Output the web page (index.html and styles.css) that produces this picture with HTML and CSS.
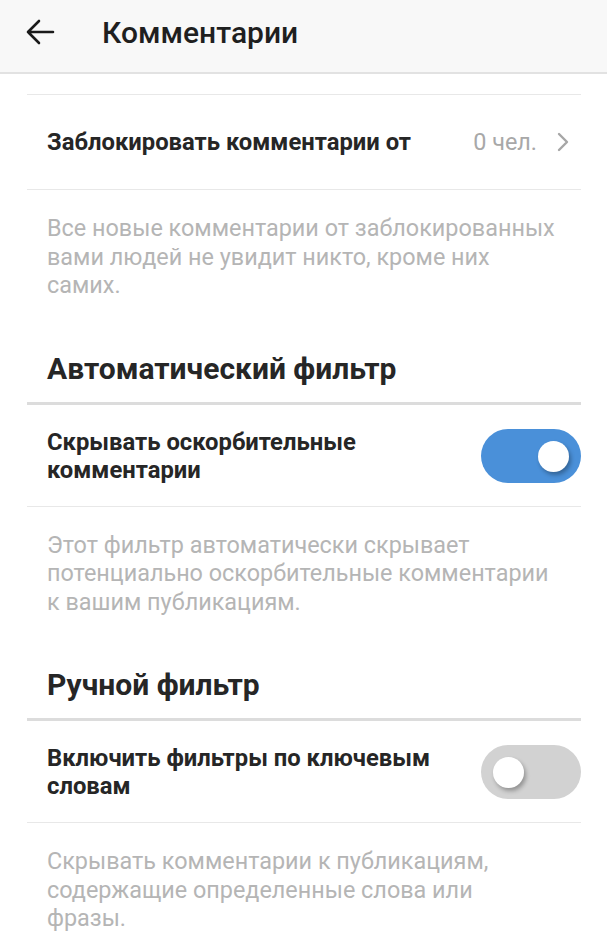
FILE: index.html
```html
<!DOCTYPE html>
<html lang="ru">
<head>
    <meta charset="UTF-8">
    <meta name="viewport" content="width=device-width, initial-scale=1.0">
    <title>Комментарии</title>
    <link rel="stylesheet" href="styles.css">
</head>
<body>
    <!-- Верхняя панель -->
    <div class="topbar">
        <span class="back">
            <svg width="30" height="26" viewBox="0 0 30 26">
                <path d="M28 13H3M14 2L3 13l11 11" fill="none" stroke="#1a1a1a" stroke-width="2.6" stroke-linecap="round" stroke-linejoin="round"/>
            </svg>
        </span>
        <span class="topbar-title">Комментарии</span>
    </div>

    <div class="content">
        <div class="spacer"></div>

        <div class="row">
            <span class="row-label">Заблокировать комментарии от</span>
            <span class="row-value">0 чел.</span>
            <svg class="chevron" width="16" height="22" viewBox="0 0 16 22">
                <path d="M4 3l8 8-8 8" fill="none" stroke="#a6a6a6" stroke-width="2.4" stroke-linecap="round" stroke-linejoin="round"/>
            </svg>
        </div>
        <p class="desc">Все новые комментарии от заблокированных<br>вами людей не увидит никто, кроме них<br>самих.</p>

        <h2 class="section-title">Автоматический фильтр</h2>
        <div class="row row-toggle">
            <span class="row-label">Скрывать оскорбительные<br>комментарии</span>
            <span class="toggle on"><span class="knob"></span></span>
        </div>
        <p class="desc">Этот фильтр автоматически скрывает<br>потенциально оскорбительные комментарии<br>к вашим публикациям.</p>

        <h2 class="section-title">Ручной фильтр</h2>
        <div class="row row-toggle">
            <span class="row-label">Включить фильтры по ключевым<br>словам</span>
            <span class="toggle"><span class="knob"></span></span>
        </div>
        <p class="desc">Скрывать комментарии к публикациям,<br>содержащие определенные слова или<br>фразы.</p>
    </div>
</body>
</html>
```

FILE: styles.css
```css
body {
    font-family: Roboto, "Noto Sans", Arial, sans-serif;
    margin: 0;
    padding: 0;
    background-color: #fff;
    color: #262626;
}

/* Верхняя панель */
.topbar {
    display: flex;
    align-items: center;
    height: 64px;
    padding-bottom: 8px;
    background-color: #f8f8f8;
    border-bottom: 2px solid #e2e2e2;
}
.back {
    display: flex;
    margin-left: 25px;
    margin-right: 47px;
}
.topbar-title {
    font-size: 30px;
    font-weight: 500;
    color: #1f1f1f;
}

/* Содержимое */
.content {
    padding: 0 26px 0 27px;
}
.spacer {
    height: 20px;
    border-bottom: 1px solid #e8e8e8;
}

.row {
    display: flex;
    align-items: center;
    height: 94px;
    padding: 0 10px 0 20px;
    border-bottom: 1px solid #e8e8e8;
}
.row-label {
    flex: 1;
    font-size: 23.8px;
    font-weight: bold;
    line-height: 28px;
    color: #262626;
    white-space: nowrap;
}
.row-value {
    font-size: 23.4px;
    color: #a8a8a8;
    margin-right: 18px;
}
.chevron {
    display: block;
}

.row-toggle {
    height: auto;
    padding: 23px 0 22px 20px;
}

/* Переключатель */
.toggle {
    position: relative;
    width: 100px;
    height: 54px;
    border-radius: 27px;
    background-color: #d2d2d2;
}
.toggle.on {
    background-color: #4a90d9;
}
.knob {
    position: absolute;
    top: 12px;
    left: 12px;
    width: 31px;
    height: 31px;
    border-radius: 50%;
    background-color: #fff;
    box-shadow: 2px 3px 4px rgba(0, 0, 0, 0.3);
}
.toggle.on .knob {
    left: auto;
    right: 12px;
}

.desc {
    margin: 0;
    padding: 24px 0 0 20px;
    font-size: 23.4px;
    line-height: 28.5px;
    color: #b5b5b5;
    white-space: nowrap;
}

.section-title {
    margin: 0;
    padding: 52px 0 16px 20px;
    font-size: 30px;
    line-height: 34px;
    font-weight: bold;
    color: #262626;
    border-bottom: 3px solid #dcdcdc;
}
```
